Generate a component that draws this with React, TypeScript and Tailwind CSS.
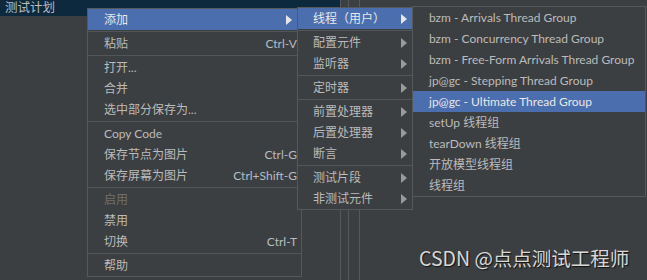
import type { ReactNode } from "react"

const FONT = "font-['Lato','Noto_Sans_CJK_SC',sans-serif]"

const Arrow = ({ active }: { active?: boolean }) => (
  <svg width="6" height="10" viewBox="0 0 6 10" className="shrink-0">
    <path d="M0 0 L6 5 L0 10 Z" fill={active ? "#e6e6e6" : "#9a9a9a"} />
  </svg>
)

const Sep = () => (
  <div className="h-[3px] flex items-center">
    <div className="h-px w-full bg-[#515658]" />
  </div>
)

type ItemProps = {
  label: ReactNode
  active?: boolean
  sub?: boolean
  shortcut?: string
  disabled?: boolean
  padL: string
  padR: string
}

const Item = ({ label, active, sub, shortcut, disabled, padL, padR }: ItemProps) => (
  <div
    className={`h-[21px] flex items-center justify-between whitespace-nowrap pt-px ${padL} ${padR} ${
      active ? "bg-[#4b6eaf] text-[#e8e8e8]" : disabled ? "text-[#6e6e6e]" : "text-[#bbbbbb]"
    }`}
  >
    <span>{label}</span>
    {sub && <Arrow active={active} />}
    {shortcut && <span className="text-[#b4bcc4]">{shortcut}</span>}
  </div>
)

export default function App() {
  const m1 = { padL: "pl-[16px]", padR: "pr-[4px]" }
  const m2 = { padL: "pl-[15px]", padR: "pr-[5px]" }
  const m3 = { padL: "pl-[16px]", padR: "pr-[4px]" }

  return (
    <div className={`relative w-[647px] h-[280px] overflow-hidden bg-[#3c3f41] text-[12px] flex ${FONT}`}>
      {/* background panels */}
      <div className="w-[340px] shrink-0">
        <div className="h-[16px] bg-[#0d293e] text-[#bbbbbb] pl-[5px] leading-[16px] text-[12.5px]">测试计划</div>
      </div>
      <div className="w-[8px] shrink-0 border-l border-[#56595b]" />
      <div className="w-[11px] shrink-0 border-l border-[#56595b]" />
      <div className="flex-1 border-l border-[#56595b]" />

      {/* menu 1 */}
      <div className="absolute left-[87px] top-[8px] w-[215px] border border-[#56595b] bg-[#3c3f41]">
        <Item label="添加" active sub {...m1} padR="pr-[9px]" />
        <Sep />
        <Item label="粘贴" shortcut="Ctrl-V" {...m1} />
        <Sep />
        <Item label="打开..." {...m1} />
        <Item label="合并" {...m1} />
        <Item label="选中部分保存为..." {...m1} />
        <Sep />
        <Item label="Copy Code" {...m1} />
        <Item label="保存节点为图片" shortcut="Ctrl-G" {...m1} />
        <Item label="保存屏幕为图片" shortcut="Ctrl+Shift-G" {...m1} />
        <Sep />
        <Item label="启用" disabled {...m1} />
        <Item label="禁用" {...m1} />
        <Item label="切换" shortcut="Ctrl-T" {...m1} />
        <Sep />
        <Item label="帮助" {...m1} />
      </div>

      {/* menu 2 */}
      <div className="absolute left-[297px] top-[7px] w-[116px] border border-[#56595b] bg-[#3c3f41]">
        <Item label="线程（用户）" active sub {...m2} />
        <Sep />
        <Item label="配置元件" sub {...m2} />
        <Item label="监听器" sub {...m2} />
        <Sep />
        <Item label="定时器" sub {...m2} />
        <Sep />
        <Item label="前置处理器" sub {...m2} />
        <Item label="后置处理器" sub {...m2} />
        <Item label="断言" sub {...m2} />
        <Sep />
        <Item label="测试片段" sub {...m2} />
        <Item label="非测试元件" sub {...m2} />
      </div>

      {/* menu 3 */}
      <div className="absolute left-[412px] top-[6px] w-[234px] border border-[#56595b] bg-[#3c3f41]">
        <Item label="bzm - Arrivals Thread Group" {...m3} />
        <Item label="bzm - Concurrency Thread Group" {...m3} />
        <Item label="bzm - Free-Form Arrivals Thread Group" {...m3} />
        <Item label="jp@gc - Stepping Thread Group" {...m3} />
        <Item label="jp@gc - Ultimate Thread Group" active {...m3} />
        <Item label="setUp 线程组" {...m3} />
        <Item label="tearDown 线程组" {...m3} />
        <Item label="开放模型线程组" {...m3} />
        <Item label="线程组" {...m3} />
      </div>

      {/* watermark */}
      <div className="absolute left-[419px] top-[246px] text-[19.5px] text-[#d8d8d8] [text-shadow:1px_1px_1px_#111] font-['Noto_Sans_CJK_SC',sans-serif] leading-[24px]">
        CSDN @点点测试工程师
      </div>
    </div>
  )
}
